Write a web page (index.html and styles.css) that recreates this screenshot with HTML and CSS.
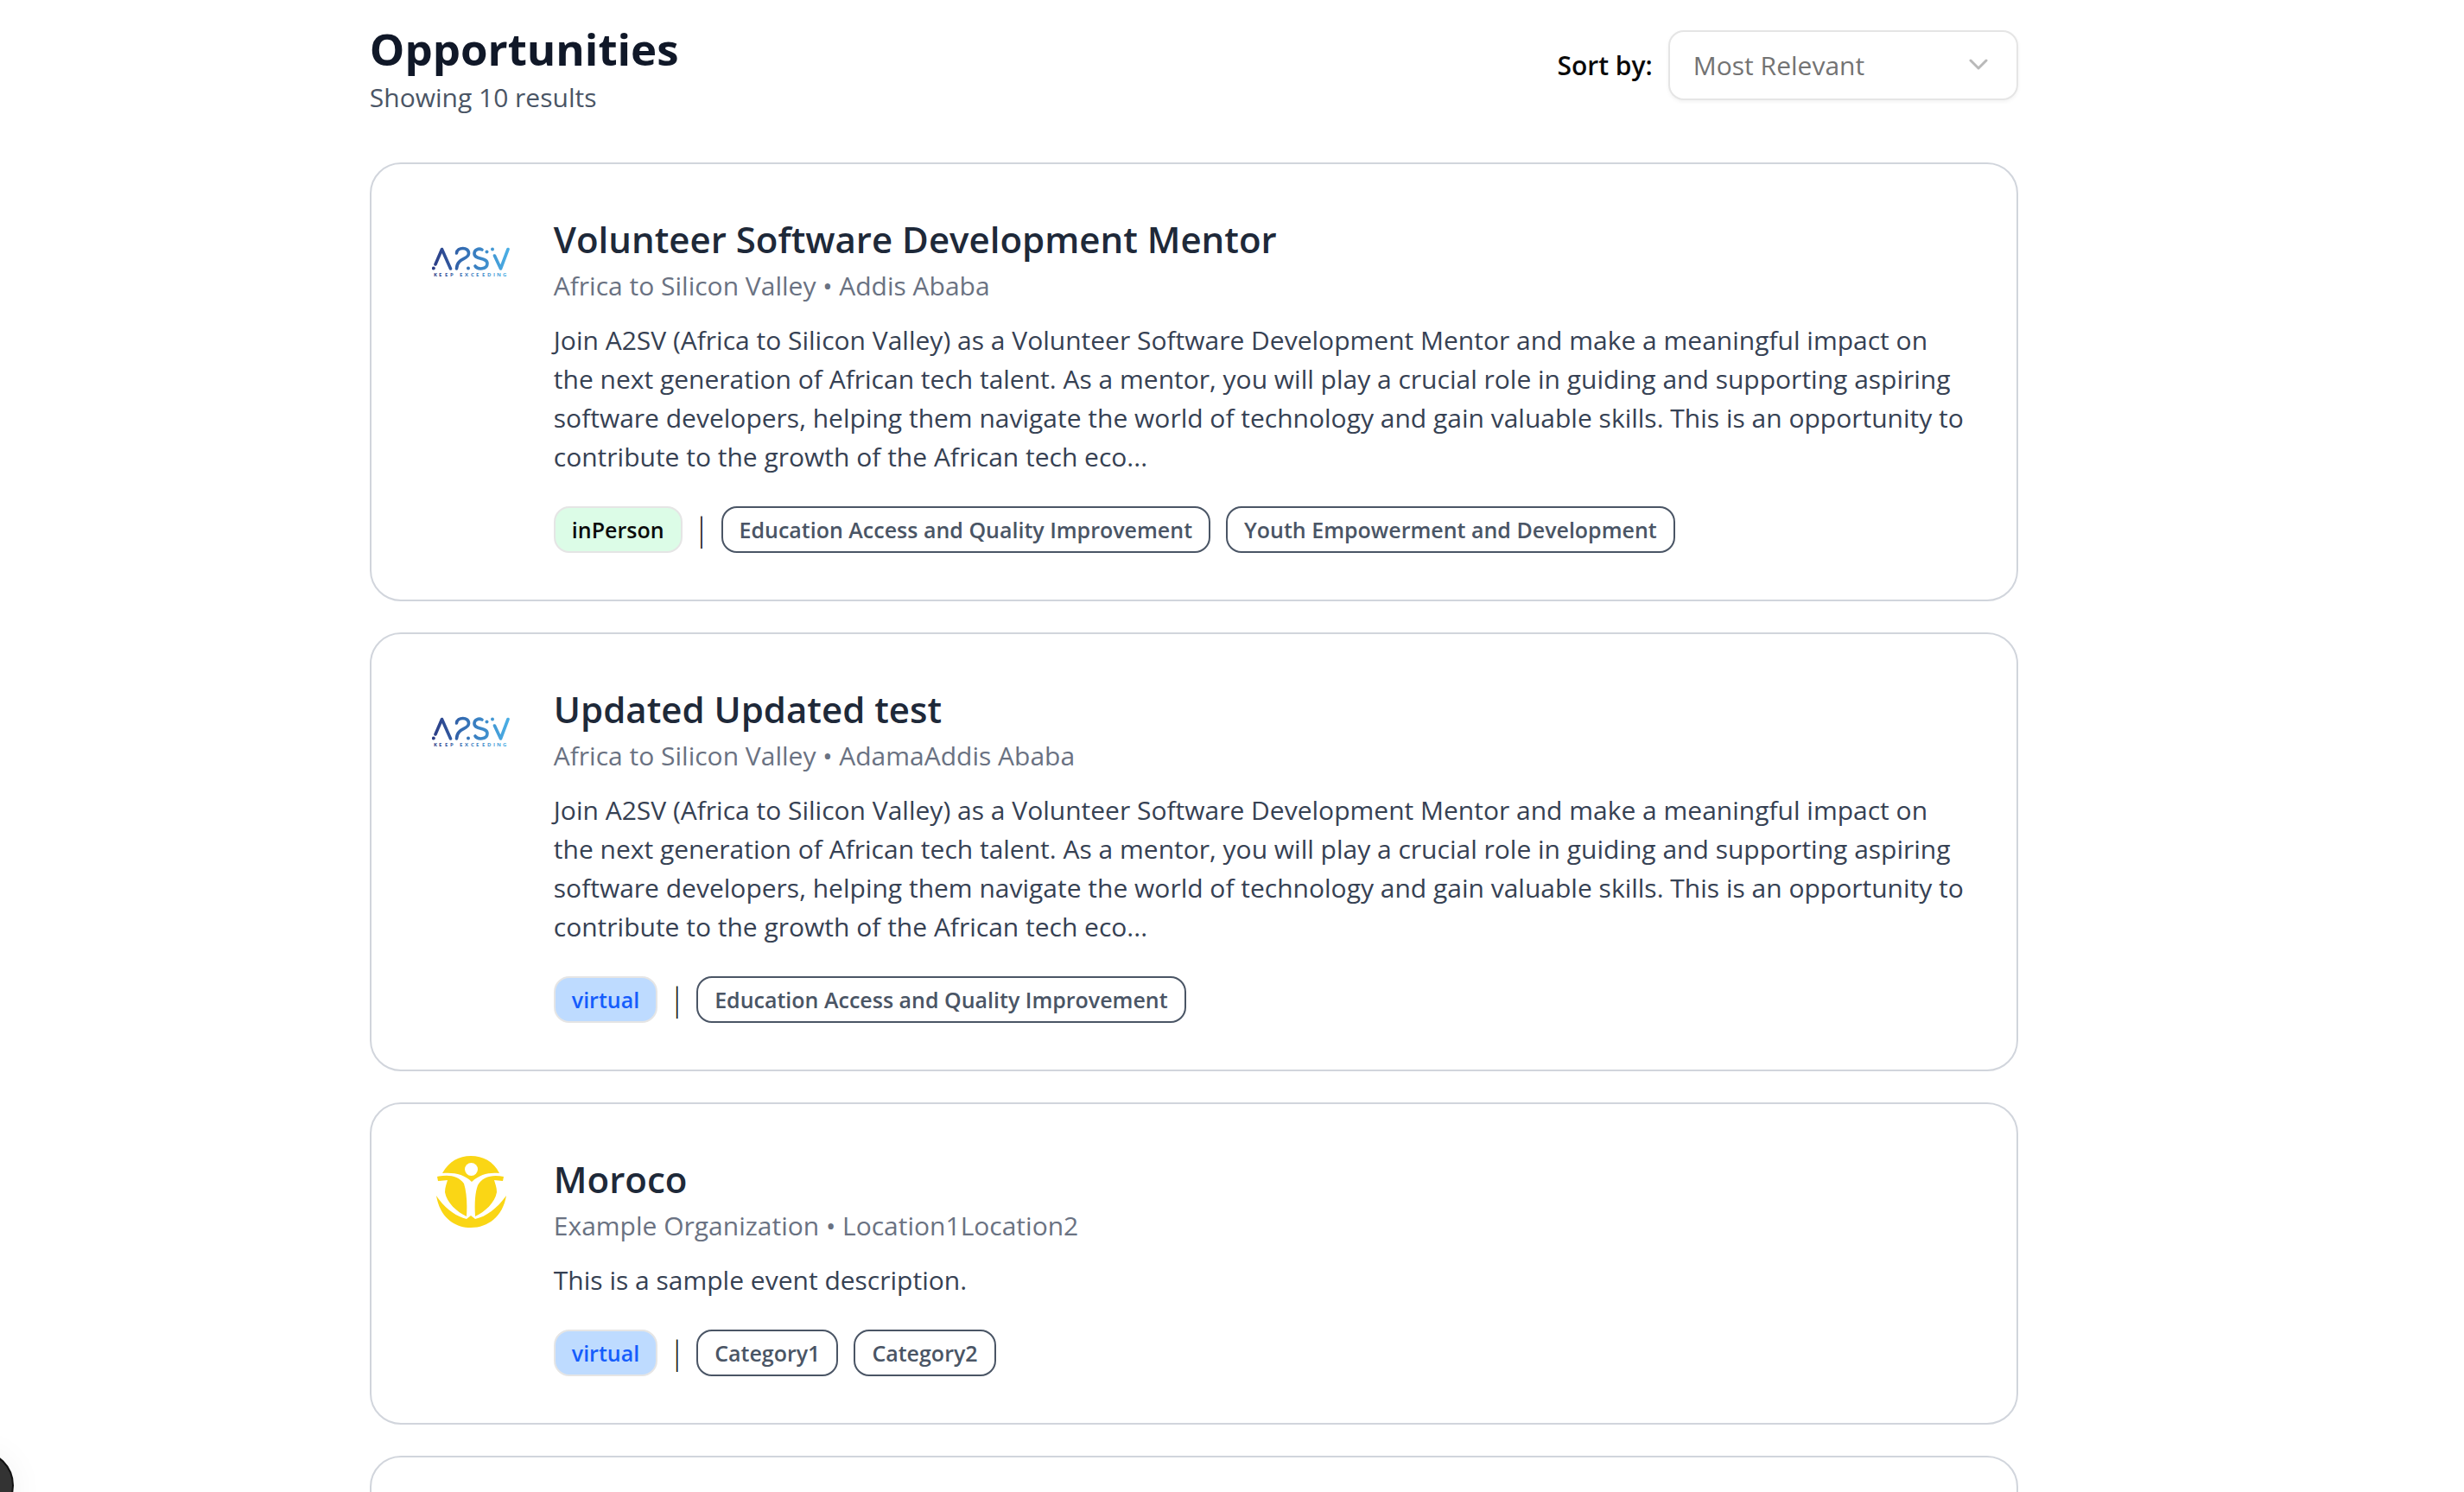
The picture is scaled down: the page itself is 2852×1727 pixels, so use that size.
FILE: index.html
```html
<!DOCTYPE html>
<html lang="en">
<head>
<meta charset="utf-8">
<title>Opportunities</title>
<meta name="viewport" content="width=device-width, initial-scale=1">
<link rel="stylesheet" href="styles.css">
</head>
<body>
<svg class="defs" width="0" height="0" aria-hidden="true">
  <defs>
    <linearGradient id="a2sv-blue" gradientUnits="userSpaceOnUse" x1="0" y1="0" x2="90" y2="0">
      <stop offset="0" stop-color="#2b3a83"/>
      <stop offset="0.45" stop-color="#3573b8"/>
      <stop offset="1" stop-color="#4bb0e6"/>
    </linearGradient>
    <symbol id="a2sv" viewBox="0 0 90 90">
      <g fill="none" stroke="url(#a2sv-blue)" stroke-width="3.6" stroke-linecap="round" stroke-linejoin="round">
        <path d="M4 60 L11.500 42.500 L21.500 65"/>
        <path d="M28.500 47 C29 39.500 43 39.500 42.500 47.500 C42 55 29 52 28.500 65"/>
        <path d="M58 43 C54 41 49 43 49 47.500 C49 55 64 51.500 64 59 C64 66 53 66.500 50 62"/>
        <path d="M72.500 50 L79.500 65 L88 42.500"/>
      </g>
      <g fill="url(#a2sv-blue)">
        <circle cx="1.800" cy="64.500" r="2"/>
        <circle cx="42" cy="64.500" r="2"/>
        <circle cx="63.500" cy="45.500" r="2"/>
        <circle cx="70" cy="42.500" r="2"/>
      </g>
      <text class="wordmark" y="74" x="2 8 15 21 26 32 38 45 51 58 64 71 75 82" fill="url(#a2sv-blue)">KEEP EXCEEDING</text>
    </symbol>
    <symbol id="sun-figure" viewBox="0 0 90 90">
      <g fill="#fad615">
        <path d="M12 24 C20 10 31 4 45 4 C59 4 71 10 78 24 C65 23 56 25 46 34 C37 25 26 23 12 24 Z"/>
        <path d="M6 28 C19 25 31 27 37 36 C40 46 41 58 40 74 C29 69 17 58 15 46 C15 40 17 36 18 32 L7 33 Z"/>
        <path d="M83 28 C70 25 58 28 53 38 C50 46 49 58 50 74 C61 69 73 58 75 46 C75 40 73 36 72 32 L82 33 Z"/>
        <path d="M5 50 C15 65 28 74 40 77 L45 73 L50 77 C63 74 75 65 86 50 C82 74 65 87 45 87 C25 87 9 74 5 50 Z"/>
      </g>
      <circle cx="45.500" cy="19.500" r="7.500" fill="#fff"/>
    </symbol>
  </defs>
</svg>

<main class="page">
  <header class="page-header">
    <div>
      <h1 class="page-title">Opportunities</h1>
      <p class="result-count">Showing 10 results</p>
    </div>
    <div class="sort">
      <label class="sort-label" for="sort">Sort by:</label>
      <div class="select-wrap">
        <select class="select" id="sort">
          <option>Most Relevant</option>
          <option>Newest</option>
        </select>
        <svg class="chevron" viewBox="0 0 24 16" aria-hidden="true"><path d="M3 3 L12 12 L21 3"/></svg>
      </div>
    </div>
  </header>

  <section class="cards">
    <article class="card">
      <svg class="logo" role="img" aria-label="A2SV"><use href="#a2sv"/></svg>
      <div class="card-body">
        <h2 class="card-title">Volunteer Software Development Mentor</h2>
        <p class="card-meta">Africa to Silicon Valley • Addis Ababa</p>
        <p class="card-text">Join A2SV (Africa to Silicon Valley) as a Volunteer Software Development Mentor and make a meaningful impact on the next generation of African tech talent. As a mentor, you will play a crucial role in guiding and supporting aspiring software developers, helping them navigate the world of technology and gain valuable skills. This is an opportunity to contribute to the growth of the African tech eco...</p>
        <div class="tags">
          <span class="tag tag-person">inPerson</span>
          <span class="divider">|</span>
          <span class="tag">Education Access and Quality Improvement</span>
          <span class="tag">Youth Empowerment and Development</span>
        </div>
      </div>
    </article>

    <article class="card">
      <svg class="logo" role="img" aria-label="A2SV"><use href="#a2sv"/></svg>
      <div class="card-body">
        <h2 class="card-title">Updated Updated test</h2>
        <p class="card-meta">Africa to Silicon Valley • AdamaAddis Ababa</p>
        <p class="card-text">Join A2SV (Africa to Silicon Valley) as a Volunteer Software Development Mentor and make a meaningful impact on the next generation of African tech talent. As a mentor, you will play a crucial role in guiding and supporting aspiring software developers, helping them navigate the world of technology and gain valuable skills. This is an opportunity to contribute to the growth of the African tech eco...</p>
        <div class="tags">
          <span class="tag tag-virtual">virtual</span>
          <span class="divider">|</span>
          <span class="tag">Education Access and Quality Improvement</span>
        </div>
      </div>
    </article>

    <article class="card">
      <svg class="logo" role="img" aria-label="Example Organization"><use href="#sun-figure"/></svg>
      <div class="card-body">
        <h2 class="card-title">Moroco</h2>
        <p class="card-meta">Example Organization • Location1Location2</p>
        <p class="card-text">This is a sample event description.</p>
        <div class="tags">
          <span class="tag tag-virtual">virtual</span>
          <span class="divider">|</span>
          <span class="tag">Category1</span>
          <span class="tag">Category2</span>
        </div>
      </div>
    </article>

    <article class="card card-next"></article>
  </section>
</main>
<button class="dev-badge" type="button" aria-label="Open tools"></button>
</body>
</html>
```
FILE: styles.css
```css
* {
  box-sizing: border-box;
}

body {
  margin: 0;
  background: #fff;
  color: #0a0a0a;
  font-family: "Open Sans", "Noto Sans", sans-serif;
  font-size: 30px;
  line-height: 45px;
  overflow: hidden;
  height: 100vh;
}

h1, h2, p {
  margin: 0;
}

.defs {
  position: absolute;
}

.page {
  max-width: 1908px;
  margin-left: 15%;
  margin-right: 36px;
  padding-top: 18px;
}

.page-header {
  display: flex;
  justify-content: space-between;
  align-items: center;
  margin-bottom: 56px;
}

.page-title {
  font-size: 51px;
  line-height: 76px;
  font-weight: 700;
  color: #101828;
}

.result-count {
  line-height: 38px;
  color: #4a5565;
}

.sort {
  display: flex;
  align-items: center;
  gap: 18px;
}

.sort-label {
  font-weight: 600;
  color: #0a0a0a;
}

.select-wrap {
  position: relative;
}

.select {
  appearance: none;
  display: block;
  width: 405px;
  height: 81px;
  padding: 0 27px;
  border: 2px solid #e5e5e5;
  border-radius: 18px;
  background: #fff;
  box-shadow: 0 2px 4px rgba(0, 0, 0, 0.05);
  color: #737373;
  font: inherit;
}

.chevron {
  position: absolute;
  right: 34px;
  top: 32px;
  width: 24px;
  height: 16px;
  fill: none;
  stroke: #b9b9b9;
  stroke-width: 3;
  stroke-linecap: round;
  stroke-linejoin: round;
  pointer-events: none;
}

.cards {
  display: flex;
  flex-direction: column;
  gap: 36px;
}

.card {
  display: flex;
  gap: 51px;
  padding: 56px 54px 54px 70px;
  border: 2px solid #d1d5dc;
  border-radius: 36px;
}

.card-next {
  min-height: 200px;
}

.logo {
  flex: none;
  width: 90px;
  height: 90px;
}

.wordmark {
  font-family: "Open Sans", sans-serif;
  font-size: 6px;
  font-weight: 700;
}

.card-body {
  flex: 1;
  min-width: 0;
}

.card-title {
  font-size: 42px;
  line-height: 62px;
  font-weight: 600;
  color: #1e2939;
}

.card-meta {
  color: #6a7282;
}

.card-text {
  margin-top: 18px;
  color: #364153;
}

.tags {
  display: flex;
  flex-wrap: wrap;
  align-items: center;
  gap: 18px;
  margin-top: 35px;
}

.tag {
  padding: 7px 19px;
  border: 2px solid #4a5565;
  border-radius: 18px;
  font-size: 25px;
  line-height: 36px;
  font-weight: 600;
  color: #4a5565;
}

.tag-person {
  border-color: #e5e5e5;
  background: #dcfce7;
  color: #0a0a0a;
}

.tag-virtual {
  border-color: #e5e5e5;
  background: #bedbff;
  color: #155dfc;
}

.divider {
  display: flex;
  justify-content: center;
  width: 9px;
  font-size: 36px;
  line-height: 54px;
  font-weight: 300;
}

.dev-badge {
  position: fixed;
  left: -65px;
  bottom: -33px;
  width: 81px;
  height: 81px;
  border: 2px solid #111;
  border-radius: 50%;
  background: #333;
  box-shadow: 0 4px 40px rgba(0, 0, 0, 0.06);
}
```
